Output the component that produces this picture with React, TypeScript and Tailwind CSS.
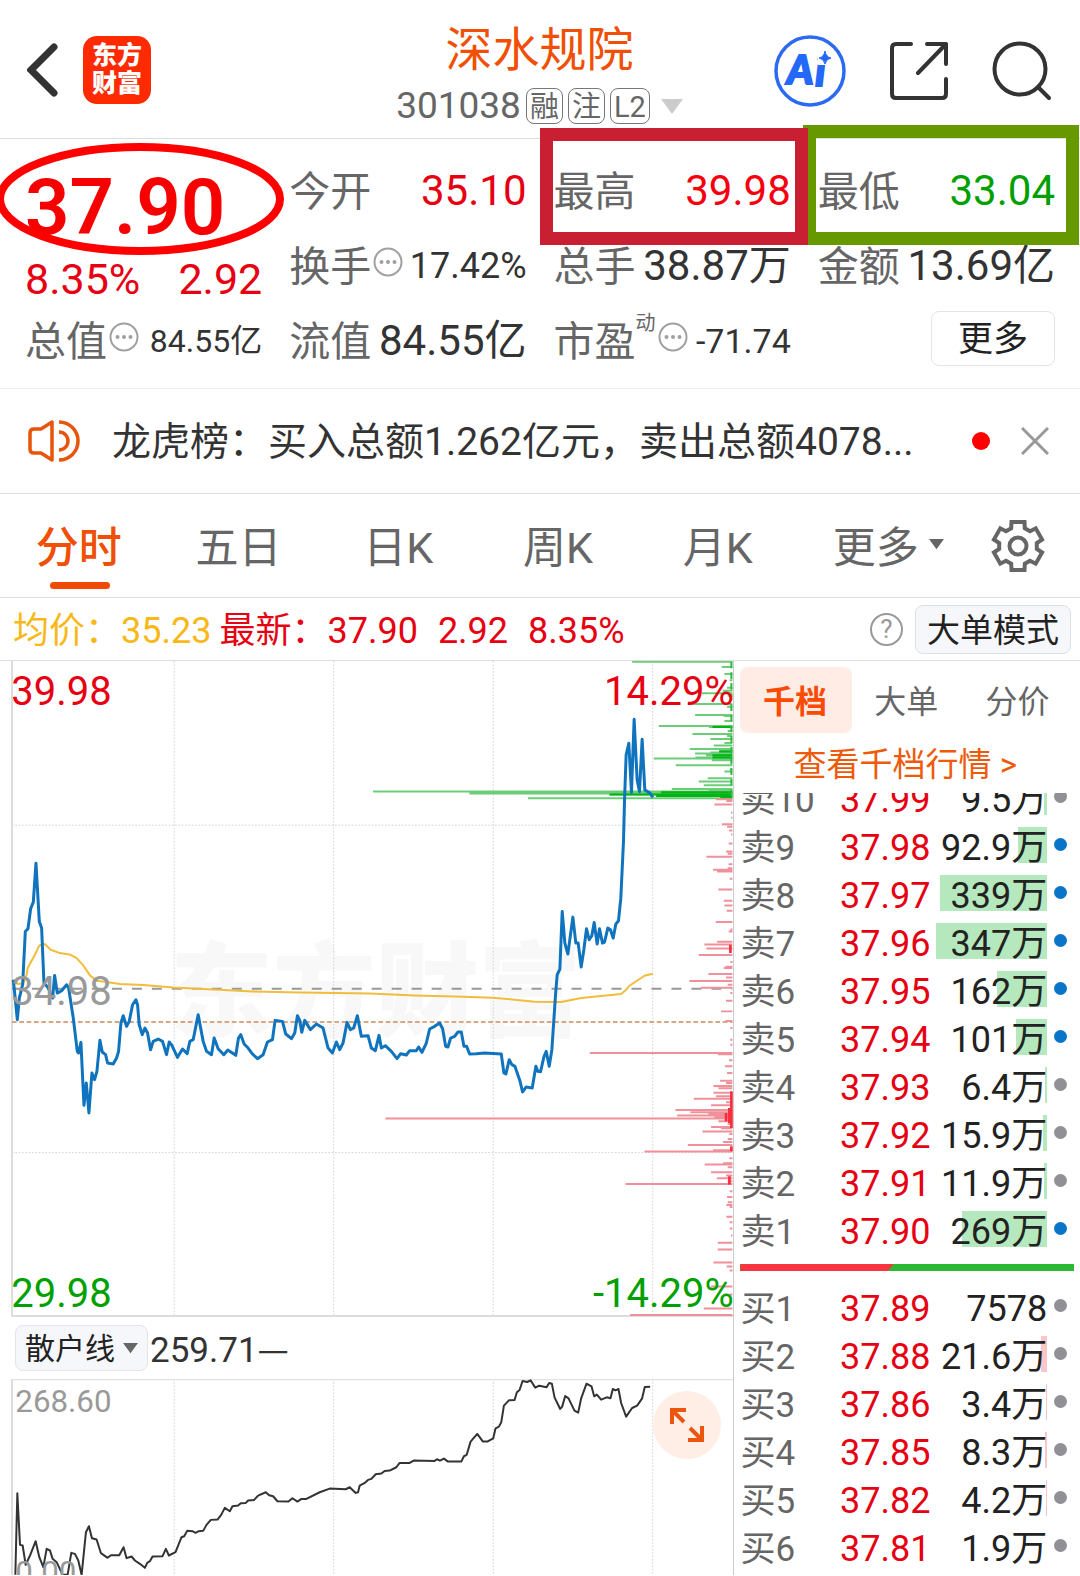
import { useState } from 'react'
import type { ReactNode } from 'react'
import clsx from 'clsx'

interface Level {
    label: string
    price: string
    volume: string
    bar: number
    big?: boolean
}

const asks: Level[] = [
    { label: '卖10', price: '37.99', volume: '9.5万', bar: 3 },
    { label: '卖9', price: '37.98', volume: '92.9万', bar: 25, big: true },
    { label: '卖8', price: '37.97', volume: '339万', bar: 92, big: true },
    { label: '卖7', price: '37.96', volume: '347万', bar: 95, big: true },
    { label: '卖6', price: '37.95', volume: '162万', bar: 43, big: true },
    { label: '卖5', price: '37.94', volume: '101万', bar: 27, big: true },
    { label: '卖4', price: '37.93', volume: '6.4万', bar: 2 },
    { label: '卖3', price: '37.92', volume: '15.9万', bar: 4 },
    { label: '卖2', price: '37.91', volume: '11.9万', bar: 3 },
    { label: '卖1', price: '37.90', volume: '269万', bar: 73, big: true },
]

const bids: Level[] = [
    { label: '买1', price: '37.89', volume: '7578', bar: 0 },
    { label: '买2', price: '37.88', volume: '21.6万', bar: 5 },
    { label: '买3', price: '37.86', volume: '3.4万', bar: 1 },
    { label: '买4', price: '37.85', volume: '8.3万', bar: 2 },
    { label: '买5', price: '37.82', volume: '4.2万', bar: 1 },
    { label: '买6', price: '37.81', volume: '1.9万', bar: 0 },
]

// Chart units: three per pixel at full width
const priceLine =
    '40,975 52,1095 58,1030 68,990 76,830 84,822 92,762 100,742 108,625 118,800 125,820 132,985 145,1000 158,1030 164,962 172,1015 185,1008 200,990 206,1000 220,1090 232,1190 236,1195 243,1163 252,1352 259,1285 267,1375 276,1255 284,1275 291,1250 300,1157 307,1192 317,1200 323,1225 340,1228 350,1210 356,1190 363,1105 370,1083 380,1115 388,1100 398,1050 408,1035 413,1050 418,1110 427,1140 435,1120 443,1135 452,1185 460,1160 475,1153 488,1160 500,1200 508,1162 515,1170 533,1208 548,1183 562,1197 570,1160 580,1155 595,1080 610,1160 620,1190 635,1200 643,1150 655,1182 672,1200 684,1186 708,1202 716,1150 723,1140 733,1168 745,1180 757,1197 773,1212 790,1200 803,1162 818,1155 826,1097 848,1100 858,1138 875,1152 885,1135 893,1083 900,1097 906,1133 915,1097 932,1125 950,1108 970,1120 985,1180 998,1195 1010,1162 1020,1185 1030,1165 1042,1103 1052,1125 1062,1120 1073,1083 1085,1145 1105,1143 1115,1180 1127,1188 1138,1142 1145,1180 1157,1173 1175,1190 1192,1212 1203,1197 1220,1201 1230,1188 1250,1188 1257,1177 1267,1193 1280,1165 1290,1123 1305,1115 1320,1105 1329,1122 1338,1175 1345,1177 1353,1150 1365,1145 1375,1132 1385,1132 1393,1175 1401,1175 1410,1198 1430,1197 1455,1195 1505,1198 1513,1255 1519,1258 1529,1215 1537,1230 1546,1235 1561,1278 1569,1312 1580,1297 1598,1300 1609,1235 1615,1250 1623,1251 1633,1207 1640,1190 1649,1235 1657,1185 1668,1020 1673,960 1681,943 1688,770 1696,865 1705,898 1720,787 1729,865 1736,865 1745,937 1753,885 1761,822 1769,855 1777,843 1784,803 1793,868 1800,822 1809,865 1815,862 1825,820 1833,825 1841,850 1849,808 1857,798 1864,730 1872,560 1875,440 1880,300 1888,265 1896,413 1904,193 1913,375 1920,410 1928,253 1936,405 1952,415 1960,428'

const averageLine =
    '42,985 58,988 70,985 80,960 83,940 105,900 118,872 135,868 152,885 180,895 212,900 230,910 250,932 270,962 290,978 320,982 360,988 430,991 520,998 640,1004 760,1010 900,1013 1110,1016 1245,1022 1365,1025 1480,1029 1545,1035 1605,1041 1685,1042 1745,1030 1865,1018 1880,1005 1890,993 1935,963 1960,957'

const retailLine =
    '46,948 52,703 60,858 68,860 77,918 90,890 107,847 118,895 130,925 140,870 150,875 158,900 170,910 188,948 203,948 214,882 225,885 235,905 245,948 258,820 267,802 276,838 290,842 303,883 323,897 333,889 358,889 371,865 380,898 395,893 405,905 420,915 435,927 442,912 450,907 458,893 488,892 498,870 507,890 527,880 545,835 553,832 562,816 578,817 587,822 597,817 610,816 620,798 633,783 653,782 664,768 675,747 690,757 698,742 715,740 723,733 738,732 745,725 763,723 775,710 798,700 808,709 820,712 833,727 866,728 878,718 893,728 905,720 920,720 960,700 990,689 1038,691 1050,685 1068,702 1075,700 1080,680 1095,672 1105,663 1115,660 1128,646 1145,644 1155,636 1170,635 1190,625 1200,612 1230,612 1242,605 1305,606 1312,601 1321,605 1333,599 1345,608 1385,608 1393,592 1401,588 1413,548 1433,525 1450,548 1463,548 1481,538 1488,508 1498,503 1505,490 1513,440 1528,424 1545,423 1552,400 1560,393 1569,366 1583,369 1593,364 1607,386 1619,380 1641,385 1649,372 1657,374 1665,415 1682,450 1688,443 1697,411 1707,418 1725,455 1736,461 1745,418 1761,374 1776,382 1784,412 1792,407 1805,422 1822,415 1833,418 1840,390 1848,394 1857,390 1865,432 1880,473 1898,447 1913,440 1928,418 1936,384 1952,383'

// [y, length] of each pending order, drawn leftwards from the right edge
const sellDepth = [
    [20, 301], [36, 32], [57, 24], [76, 8], [98, 16], [107, 29], [115, 92], [122, 14], [147, 134], [155, 16],
    [180, 112], [183, 26], [198, 24], [213, 221], [216, 71], [228, 14], [237, 120], [243, 16], [252, 66],
    [264, 24], [272, 56], [282, 128], [288, 39], [293, 66], [296, 112], [301, 79], [308, 111], [311, 236],
    [316, 62], [331, 170], [343, 8], [350, 24], [370, 74], [380, 101], [391, 86], [402, 182], [406, 70],
    [410, 1079], [412, 214], [416, 790], [419, 369], [423, 229], [427, 36], [430, 614],
]

const buyDepth = [
    [433, 49], [438, 18], [449, 54], [474, 4], [489, 4], [508, 31], [516, 16], [527, 10], [539, 4], [566, 11],
    [590, 19], [597, 14], [606, 78], [628, 11], [640, 14], [645, 58], [650, 46], [672, 8], [704, 42],
    [738, 26], [752, 24], [768, 17], [802, 50], [824, 6], [830, 11], [861, 46], [869, 84], [881, 78],
    [901, 101], [922, 6], [936, 21], [940, 26], [958, 72], [968, 19], [979, 129], [990, 14], [999, 95],
    [1015, 6], [1038, 19], [1070, 34], [1099, 21], [1120, 6], [1155, 6], [1170, 6], [1195, 428], [1199, 44],
    [1217, 10], [1235, 22], [1255, 16], [1278, 37], [1285, 19], [1294, 57], [1301, 42], [1314, 57],
    [1325, 49], [1332, 116], [1343, 19], [1352, 64], [1366, 171], [1373, 126], [1378, 72], [1383, 166],
    [1388, 54], [1392, 1042], [1400, 42], [1408, 14], [1417, 64], [1421, 34], [1431, 90], [1438, 9],
    [1453, 14], [1462, 28], [1471, 134], [1487, 58], [1491, 264], [1511, 9], [1526, 28], [1530, 83],
    [1538, 14], [1553, 64], [1563, 19], [1571, 46], [1580, 14], [1588, 321], [1610, 8], [1627, 16],
    [1643, 14], [1651, 18], [1657, 8], [1687, 18], [1703, 8], [1722, 8], [1743, 4], [1765, 44], [1785, 44],
    [1824, 57], [1836, 17], [1848, 8], [1896, 64], [1920, 9], [1962, 86], [1982, 307],
]

const gearPath = [0, 1, 2, 3, 4, 5]
    .flatMap((k) => {
        const mid = -90 + k * 60
        return [[-21, 19], [-15, 25], [15, 25], [21, 19]].map(([turn, r]) => {
            const a = ((mid + turn) * Math.PI) / 180
            return `${(27 + r * Math.cos(a)).toFixed(1)} ${(27 + r * Math.sin(a)).toFixed(1)}`
        })
    })
    .join(' L')

function Triangle({ className }: { className: string }) {
    return (
        <svg viewBox="0 0 22 15" className={className} fill="currentColor" aria-hidden="true">
            <path d="M0 0H22L11 15Z" />
        </svg>
    )
}

function InfoButton() {
    return (
        <button type="button" aria-label="说明" className="ml-0.5 shrink-0 pb-2 text-[#a0a0a0]">
            <svg viewBox="0 0 30 30" className="size-[30px]" fill="none" stroke="currentColor" strokeWidth="2">
                <circle cx="15" cy="15" r="13.5" />
                <g fill="currentColor" stroke="none">
                    <circle cx="8.5" cy="15" r="2" />
                    <circle cx="15" cy="15" r="2" />
                    <circle cx="21.5" cy="15" r="2" />
                </g>
            </svg>
        </button>
    )
}

interface StatProps {
    label: string
    value: string
    className?: string
    extra?: ReactNode
}

function Stat({ label, value, className = 'text-[42px] text-[#333]', extra }: StatProps) {
    return (
        <div className="flex items-center whitespace-nowrap">
            <dt className="flex items-center text-[41px] text-[#666]">
                <span className="pt-1">{label}</span>
                {extra}
            </dt>
            <dd className={clsx('ml-auto', className)}>{value}</dd>
        </div>
    )
}

function Header() {
    return (
        <header className="grid grid-cols-[1fr_auto_1fr] items-center border-b border-[#ddd] pb-3.5 pl-[27px] pr-7 pt-[22px]">
            <div className="flex items-center gap-6 pb-1.5">
                <button type="button" aria-label="返回" className="text-[#333]">
                    <svg viewBox="0 0 32 56" className="h-14 w-8" fill="none" stroke="currentColor" strokeWidth="7" strokeLinecap="round">
                        <path d="M27 5L4 28L27 51" />
                    </svg>
                </button>
                <a
                    href="#home"
                    className="flex size-[68px] flex-col items-center justify-center rounded-[14px] bg-[#ff2a00] text-[25px] font-black leading-[28px] text-white"
                >
                    <span>东方</span>
                    <span>财富</span>
                </a>
            </div>
            <div className="flex flex-col items-center gap-2.5">
                <h1 className="text-[47px] leading-[56px] text-[#f04f05]">深水规院</h1>
                <div className="flex items-center gap-[5px] text-[#666]">
                    <span className="text-[37px] leading-9">301038</span>
                    {['融', '注', 'L2'].map((tag) => (
                        <span
                            key={tag}
                            className="flex h-9 min-w-[37px] items-center justify-center rounded-lg border border-[#777] px-[3px] pt-0.5 text-[29px] leading-none"
                        >
                            {tag}
                        </span>
                    ))}
                    <Triangle className="ml-1.5 w-[22px] text-[#ccc]" />
                </div>
            </div>
            <div className="flex items-center justify-end gap-11 pb-1 text-[#333]">
                <button type="button" aria-label="Ai">
                    <svg viewBox="0 0 72 72" className="size-[72px]">
                        <text x="13" y="49" fontSize="40" fill="#2468f8" stroke="#2468f8" strokeWidth="2" className="font-black italic [font-family:Lato,sans-serif]">
                            A<tspan dx="2" dy="2">i</tspan>
                        </text>
                        <path d="M44 12H60V30H44Z" fill="#fff" />
                        <path d="M51 16Q52 22 57 23Q52 24 51 29Q50 24 45 23Q50 22 51 16Z" fill="#2468f8" stroke="#2468f8" />
                        <circle cx="36" cy="36" r="34" fill="none" stroke="#2b6bf3" strokeWidth="3.5" />
                    </svg>
                </button>
                <button type="button" aria-label="分享">
                    <svg viewBox="0 0 58 58" className="size-[58px]" fill="none" stroke="currentColor" strokeWidth="4" strokeLinecap="round" strokeLinejoin="round">
                        <path d="M21 2H6Q2 2 2 6V52Q2 56 6 56H52Q56 56 56 52V37" />
                        <path d="M37 2H56V22M56 2L28 31" />
                    </svg>
                </button>
                <button type="button" aria-label="搜索">
                    <svg viewBox="0 0 60 60" className="size-[60px]" fill="none" stroke="currentColor" strokeWidth="4" strokeLinecap="round">
                        <circle cx="28" cy="28" r="25.500" />
                        <path d="M46 46L57 57" />
                    </svg>
                </button>
            </div>
        </header>
    )
}

function Quote() {
    return (
        <section className="relative border-b border-[#eee] px-[25px] pb-2.5 pt-3.5 leading-none">
            <dl className="grid auto-rows-[75px] grid-cols-4 gap-x-[27px]">
                <div className="row-span-2 flex flex-col justify-between whitespace-nowrap pb-0.5 text-[#e60012]">
                    <dt className="sr-only">现价</dt>
                    <dd className="pt-4 text-[78px] font-semibold text-[#f60000]">37.90</dd>
                    <dd className="flex justify-between text-[43px]">
                        <span>8.35%</span>
                        <span>2.92</span>
                    </dd>
                </div>
                <Stat label="今开" value="35.10" className="text-[42px] text-[#e60012]" />
                <Stat label="最高" value="39.98" className="text-[42px] text-[#f60010]" />
                <Stat label="最低" value="33.04" className="text-[42px] text-[#00a000]" />
                <Stat label="换手" value="17.42%" className="text-[36px] text-[#333]" extra={<InfoButton />} />
                <Stat label="总手" value="38.87万" />
                <Stat label="金额" value="13.69亿" />
                <Stat label="总值" value="84.55亿" className="text-[32px] text-[#333]" extra={<InfoButton />} />
                <Stat label="流值" value="84.55亿" />
                <Stat
                    label="市盈"
                    value="-71.74"
                    className="text-[34px] text-[#333]"
                    extra={
                        <>
                            <span className="pb-9 text-[20px]">动</span>
                            <InfoButton />
                        </>
                    }
                />
                <div className="flex items-center justify-end pb-1">
                    <button type="button" className="rounded-lg border border-[#e2e4e8] px-[26px] pb-2 pt-2.5 text-[35px] text-[#222]">
                        更多
                    </button>
                </div>
            </dl>

            {/* Hand-drawn highlights over the price, the high and the low */}
            <svg viewBox="0 0 288 112" className="pointer-events-none absolute -left-1 top-1 w-72" fill="none" aria-hidden="true">
                <ellipse cx="144" cy="56" rx="140" ry="52" stroke="#f00" strokeWidth="8" />
            </svg>
            <div className="pointer-events-none absolute -top-3.5 right-px h-[120px] w-[276px] border-[13px] border-[#669800]" />
            <div className="pointer-events-none absolute -top-[11px] right-[272px] h-[117px] w-[268px] border-[13px] border-[#c82032]" />
        </section>
    )
}

function Notice() {
    const [open, setOpen] = useState(true)

    if (!open) {
        return null
    }

    return (
        <section className="flex h-[105px] items-center border-b border-[#ddd] pl-7 pr-[31px]">
            <svg viewBox="0 0 52 44" className="w-[52px] shrink-0" fill="none" stroke="#e8540a" strokeWidth="3.500" aria-hidden="true">
                <path d="M24 3V41L13 34H6Q2 34 2 30V14Q2 10 6 10H13Z" strokeLinejoin="round" />
                <path d="M31 3A19 19 0 0 1 31 41M31 13A9 9 0 0 1 31 31" />
            </svg>
            <p className="ml-8 flex-1 truncate pt-0.5 text-[39px] text-[#333]">龙虎榜：买入总额1.262亿元，卖出总额4078...</p>
            <span className="mr-[31px] size-[18px] shrink-0 rounded-full bg-[#f00]" />
            <button type="button" aria-label="关闭" onClick={() => setOpen(false)}>
                <svg viewBox="0 0 28 28" className="size-7" stroke="#999" strokeWidth="3">
                    <path d="M1 1L27 27M27 1L1 27" />
                </svg>
            </button>
        </section>
    )
}

function PeriodTabs() {
    const [active, setActive] = useState('分时')

    return (
        <nav className="grid h-[104px] grid-cols-[repeat(5,4fr)_4.5fr_2fr] items-stretch border-b border-[#ddd] pr-[22px] text-[43px] text-[#666]">
            {['分时', '五日', '日K', '周K', '月K'].map((tab) => (
                <button
                    key={tab}
                    type="button"
                    onClick={() => setActive(tab)}
                    className={clsx('relative pr-0.5 pt-1.5', active === tab && 'font-medium text-[#f04f05]')}
                >
                    {tab}
                    {active === tab && (
                        <span className="absolute bottom-2 left-1/2 h-[7px] w-[60px] -translate-x-1/2 rounded-full bg-[#f04a05]" />
                    )}
                </button>
            ))}
            <button type="button" className="flex items-center justify-center gap-2.5 pt-1.5">
                更多
                <Triangle className="mb-2 w-[15px]" />
            </button>
            <button type="button" aria-label="设置" className="flex items-center justify-center">
                <svg viewBox="0 0 54 54" className="size-[54px]" fill="none" stroke="currentColor" strokeWidth="4">
                    <path d={`M${gearPath}Z`} />
                    <circle cx="27" cy="27" r="8.500" />
                </svg>
            </button>
        </nav>
    )
}

function Legend() {
    return (
        <div className="flex h-[63px] items-center whitespace-nowrap border-b border-[#ddd] pl-[13px] pr-[9px] text-[36px] leading-none text-[#e60012]">
            <span className="pt-1 text-[#f8b818]">均价：35.23</span>
            <span className="ml-2 pt-1">最新：37.90</span>
            <span className="ml-5 pt-1">2.92</span>
            <span className="ml-5 pt-1">8.35%</span>
            <button type="button" aria-label="帮助" className="ml-auto mr-3 flex size-[33px] items-center justify-center rounded-full border-2 border-[#999] text-[26px] text-[#999]">
                ?
            </button>
            <button type="button" className="rounded-lg border border-[#dcdfe4] bg-[#f6f7fa] px-[11px] pb-1.5 pt-2 text-[33px] text-[#222]">
                大单模式
            </button>
        </div>
    )
}

function MinuteChart() {
    return (
        <svg viewBox="0 18 2202 1971" className="block w-full" fill="none" role="img" aria-label="分时走势">
            <text x="510" y="1122" fontSize="309" fill="#f8f8f8" className="font-black">
                东方财富
            </text>
            <g stroke="#d4d4d4" strokeWidth="3" strokeDasharray="5 5">
                <path d="M523 18V1985M1002 18V1985M1481 18V1985M1960 18V1985" />
                <path d="M36 511H2199M36 1494H2199" />
            </g>
            <path d="M36 18V1987M36 1985H2202" stroke="#ddd" strokeWidth="6" />
            <path d="M36 1002H2199" stroke="#999" strokeWidth="6" strokeDasharray="30 30" />
            <path d="M36 1102H2199" stroke="#cc8a5c" strokeWidth="4" strokeDasharray="14 8" />
            <path
                d={sellDepth.map(([y, length]) => `M2199 ${y}h${-length}`).join('')}
                stroke="#6bcd78"
                strokeWidth="6"
            />
            <path
                d="M2199 412h-214M2199 419h-369M2199 423h-229M2199 427h-36M2199 216h-60M2199 290h-40M2199 301h-60M2199 308h-60"
                stroke="#00b414"
                strokeWidth="6"
            />
            <path d="M2196 20V430" stroke="#2cba3a" strokeWidth="6" strokeDasharray="20 12" />
            <path
                d={buyDepth.map(([y, length]) => `M2199 ${y}h${-length}`).join('')}
                stroke="#f0909a"
                strokeWidth="6"
            />
            <path
                d="M2196 1310V1420M2190 1360V1405M2180 1375V1400M2190 1565V1590M2193 870V895M2196 1475V1490"
                stroke="#fb2c3c"
                strokeWidth="8"
            />
            <polyline points={averageLine} stroke="#f2bc3c" strokeWidth="6" strokeLinejoin="round" />
            <polyline points={priceLine} stroke="#0f74bd" strokeWidth="9" strokeLinejoin="round" />
            <g fontSize="120">
                <text x="34" y="149" fill="#e60012">39.98</text>
                <text x="2203" y="149" fill="#e60012" textAnchor="end">14.29%</text>
                <text x="34" y="1050" fill="#999">34.98</text>
                <text x="34" y="1957" fill="#00a000">29.98</text>
                <text x="2203" y="1957" fill="#00a000" textAnchor="end">-14.29%</text>
            </g>
        </svg>
    )
}

function RetailChart() {
    return (
        <div className="relative">
            <svg viewBox="0 360 2202 588" className="block w-full" fill="none" role="img" aria-label="散户线">
                <path d="M523 360V948M1002 360V948M1481 360V948M1960 360V948" stroke="#d4d4d4" strokeWidth="3" strokeDasharray="5 5" />
                <path d="M36 360V948" stroke="#ddd" strokeWidth="6" />
                <path d="M36 362H2202" stroke="#e2e2e2" strokeWidth="4" />
                <polyline points={retailLine} stroke="#333" strokeWidth="6" strokeLinejoin="round" />
                <g fontSize="94" fill="#999">
                    <text x="46" y="459">268.60</text>
                    <text x="46" y="972">0.00</text>
                </g>
            </svg>
            <button
                type="button"
                aria-label="全屏"
                className="absolute right-3 top-3 flex size-[68px] items-center justify-center rounded-full bg-[#ffeee6]"
            >
                <svg viewBox="0 0 34 34" className="size-[34px]" fill="none" stroke="#ea5510" strokeWidth="4">
                    <path d="M2 16V2H16M2 2L14 14M32 18V32H18M32 32L20 20" />
                </svg>
            </button>
        </div>
    )
}

function LevelTable({ levels, side }: { levels: Level[]; side: 'ask' | 'bid' }) {
    return (
        <table className={clsx('w-full table-fixed text-[36px] leading-none', side === 'ask' && '-mt-[19px]')}>
            <colgroup>
                <col className="w-[27%]" />
                <col className="w-[30%]" />
                <col className="w-[35%]" />
                <col className="w-[8%]" />
            </colgroup>
            <tbody>
                {levels.map((level) => (
                    <tr key={level.label} className="h-12 whitespace-nowrap">
                        <th scope="row" className="p-0 pt-1 text-left text-[35px] font-normal text-[#666]">
                            {level.label}
                        </th>
                        <td className="p-0 pt-1 text-right text-[#e60012]">{level.price}</td>
                        <td className="relative p-0 pt-1 text-right text-[#222]">
                            <span
                                className={clsx('absolute right-0 top-[5px] h-9', side === 'ask' ? 'bg-[#b6e8bd]' : 'bg-[#fbc6c9]')}
                                style={{ width: `${level.bar}%` }}
                            />
                            <span className="relative">{level.volume}</span>
                        </td>
                        <td className="p-0 pb-1">
                            <span className={clsx('ml-auto mr-[7px] block size-[13px] rounded-full', level.big ? 'bg-[#0a74c8]' : 'bg-[#909096]')} />
                        </td>
                    </tr>
                ))}
            </tbody>
        </table>
    )
}

function OrderBook() {
    const [active, setActive] = useState('千档')

    return (
        <aside className="min-w-0 flex-1 px-1.5 pt-1.5">
            <div className="grid grid-cols-3 text-[32px] text-[#666]">
                {['千档', '大单', '分价'].map((tab) => (
                    <button
                        key={tab}
                        type="button"
                        onClick={() => setActive(tab)}
                        className={clsx('h-[66px] rounded-lg pr-0.5 pt-1', active === tab && 'bg-[#ffece4] font-bold text-[#fa4a05]')}
                    >
                        {tab}
                    </button>
                ))}
            </div>
            <a href="#depth" className="flex h-[60px] items-center justify-center pr-1 pt-1 text-[33px] text-[#ee5a0a]">
                查看千档行情 &gt;
            </a>
            <div className="overflow-hidden">
                <LevelTable levels={asks} side="ask" />
            </div>
            <div className="mb-3 mt-2.5 flex h-[7px] bg-[#2cb832]">
                <span className="w-[46%] bg-[#f83440] [clip-path:polygon(0_0,100%_0,96%_100%,0_100%)]" />
            </div>
            <LevelTable levels={bids} side="bid" />
        </aside>
    )
}

export default function App() {
    return (
        <div className="min-h-screen overflow-hidden bg-white [font-family:Roboto,'Noto_Sans_CJK_SC',sans-serif]">
            <Header />
            <Quote />
            <Notice />
            <PeriodTabs />
            <Legend />
            <main className="flex">
                <div className="w-[68%] border-r border-[#ccc]">
                    <MinuteChart />
                    <div className="flex h-[62px] items-center pl-[15px] leading-none">
                        <button
                            type="button"
                            className="flex h-[46px] items-center gap-2 rounded-lg border border-[#e2e4e8] bg-[#f6f7fa] px-[9px] text-[30px] text-[#222]"
                        >
                            <span className="pt-0.5">散户线</span>
                            <Triangle className="w-[15px] text-[#666]" />
                        </button>
                        <span className="ml-0.5 text-[35px] text-[#333]">
                            259.71<span className="[font-family:'Noto_Sans_CJK_SC',sans-serif]">—</span>
                        </span>
                    </div>
                    <RetailChart />
                </div>
                <OrderBook />
            </main>
        </div>
    )
}
